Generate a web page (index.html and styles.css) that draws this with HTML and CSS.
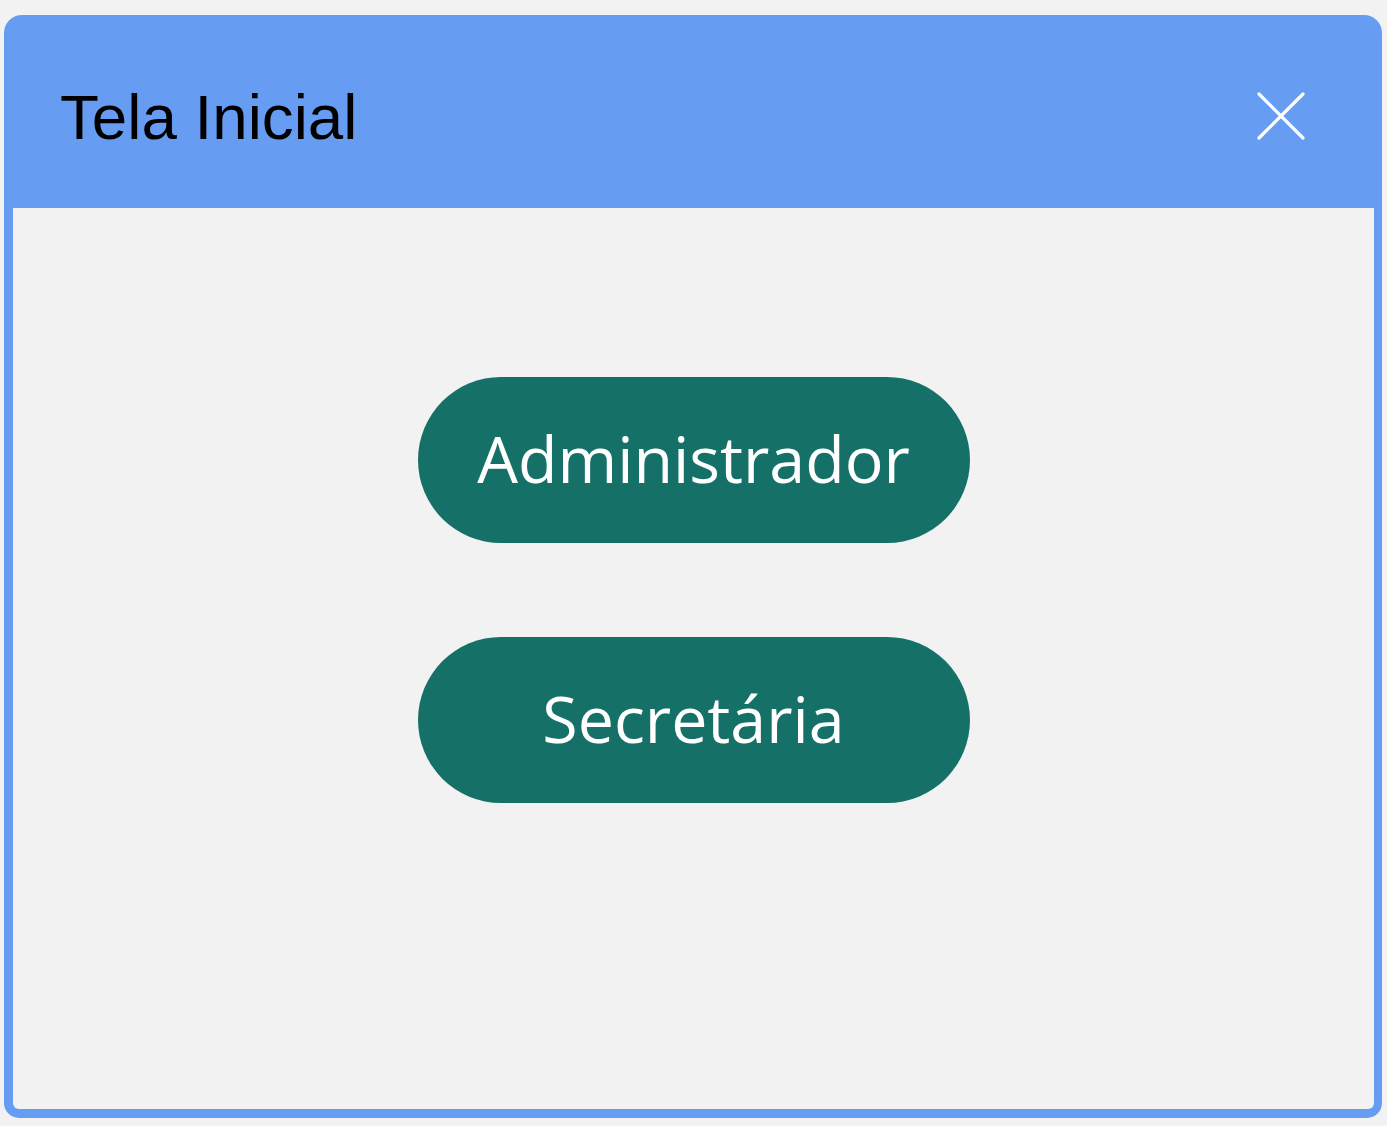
FILE: index.html
```html
<!DOCTYPE html>
<html lang="pt">
<head>
<meta charset="utf-8">
<title>Tela Inicial</title>
<link rel="stylesheet" href="styles.css">
</head>
<body>
<div class="window">
  <div class="header">
    <h1 class="title">Tela Inicial</h1>
    <button class="close" aria-label="Fechar">
      <svg width="48" height="48" viewBox="0 0 48 48"><path d="M2 2 L46 46 M46 2 L2 46" stroke="#fff" stroke-width="3.2" stroke-linecap="round" fill="none"/></svg>
    </button>
  </div>
  <div class="content">
    <button class="pill">Administrador</button>
    <button class="pill">Secretária</button>
  </div>
</div>
</body>
</html>
```
FILE: styles.css
```css
html, body {
  margin: 0;
  background: #f2f2f2;
}
body {
  padding: 15px 5px 8px 4px;
}
.window {
  width: 1378px;
  height: 1103px;
  box-sizing: border-box;
  background: #669df2;
  border-radius: 18px 18px 15px 15px;
  display: flex;
  flex-direction: column;
}
.header {
  height: 193px;
  flex: none;
  display: flex;
  align-items: center;
  justify-content: space-between;
  padding: 0 77px 0 56px;
}
.title {
  margin: 0;
  font-family: "Liberation Sans", Arial, sans-serif;
  font-weight: normal;
  font-size: 63.7px;
  color: #000;
  line-height: 1;
  position: relative;
  top: 5px;
}
.close {
  border: 0;
  background: none;
  padding: 0;
  width: 48px;
  height: 48px;
  display: block;
  position: relative;
  top: 4px;
}
.close svg { display: block; }
.content {
  flex: 1;
  margin: 0 8px 9px 9px;
  background: #f2f2f2;
  border-radius: 0 0 6px 6px;
  display: flex;
  flex-direction: column;
  align-items: center;
  padding-top: 169px;
  gap: 94px;
}
.pill {
  width: 552px;
  height: 166px;
  border: 0;
  border-radius: 83px;
  background: #157168;
  color: #fff;
  font-family: "Open Sans", "Noto Sans", sans-serif;
  font-size: 64.5px;
  padding: 0 0 4px 0;
  line-height: 1;
}
```
